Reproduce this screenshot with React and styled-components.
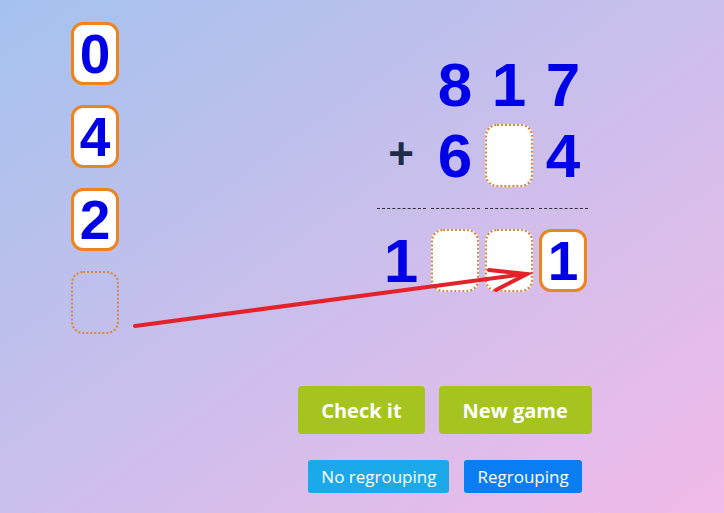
import React from 'react';
import styled, { createGlobalStyle } from 'styled-components';

const GlobalStyle = createGlobalStyle`
  html, body {
    margin: 0;
    padding: 0;
  }
  body {
    font-family: 'Liberation Sans', Arial, sans-serif;
  }
`;

const Page = styled.div`
  position: relative;
  box-sizing: border-box;
  width: 100%;
  min-height: 513px;
  padding: 22px 0 0 71px;
  background: linear-gradient(to bottom right, #a4c2ee, #f2bbe9);
  overflow: hidden;
`;

const Board = styled.div`
  display: flex;
  align-items: flex-start;
  gap: 257px;
`;

const Column = styled.div`
  display: flex;
  flex-direction: column;
  gap: 20px;
`;

const Tile = styled.div`
  box-sizing: border-box;
  width: 48px;
  height: 63px;
  margin: 0 auto;
  border-radius: 12px;
  border: ${p => (p.filled ? '3px solid #ec8421' : '2px dotted #d9873a')};
  background: ${p => (p.empty ? 'transparent' : '#fff')};
  color: #0000e8;
  font-weight: bold;
  font-size: 55px;
  line-height: 59px;
  text-align: center;
`;

const Problem = styled.div`
  display: flex;
  flex-direction: column;
  margin-top: 31px;
`;

const Row = styled.div`
  display: grid;
  grid-template-columns: repeat(4, 50px);
  column-gap: 4px;
  height: 64px;
  margin-top: ${p => p.gap || 0}px;
`;

const Digit = styled.div`
  color: #0000e8;
  font-weight: bold;
  font-size: 62px;
  line-height: 64px;
  text-align: center;
`;

const Plus = styled.div`
  color: #1f2c48;
  font-weight: bold;
  font-size: 44px;
  line-height: 60px;
  text-align: center;
`;

const Rule = styled.div`
  display: grid;
  grid-template-columns: repeat(4, 49px);
  column-gap: 5px;
  margin: 20px 0 20px 1px;
`;

const Dash = styled.div`
  border-bottom: 1px dashed #30303c;
`;

const Controls = styled.div`
  display: flex;
  flex-direction: column;
  align-items: center;
  width: 294px;
  margin: 52px 0 0 227px;
  gap: 26px;
`;

const ButtonRow = styled.div`
  display: flex;
  gap: ${p => p.gap}px;
`;

const BigButton = styled.button`
  height: 48px;
  padding: 0 ${p => p.pad}px;
  border: none;
  border-radius: 4px;
  background: #a6c420;
  color: #fff;
  font-family: 'Open Sans', sans-serif;
  font-weight: bold;
  font-size: 20px;
  cursor: pointer;
`;

const ModeButton = styled.button`
  height: 33px;
  padding: 0 13px;
  border: none;
  border-radius: 3px;
  background: ${p => (p.active ? '#0b7df3' : '#1ca9ea')};
  color: #fff;
  font-family: 'Open Sans', sans-serif;
  font-size: 17px;
  cursor: pointer;
`;

const Arrow = styled.svg`
  position: absolute;
  left: 0;
  top: 0;
  pointer-events: none;
`;

const App = () => {
  const pool = ['0', '4', '2', ''];

  return (
    <Page>
      <GlobalStyle />
      <Board>
        <Column>
          {pool.map((d, i) => (
            <Tile key={i} filled={!!d} empty={!d}>
              {d}
            </Tile>
          ))}
        </Column>

        <Problem>
          <Row>
            <div />
            <Digit>8</Digit>
            <Digit>1</Digit>
            <Digit>7</Digit>
          </Row>
          <Row gap={7}>
            <Plus>+</Plus>
            <Digit>6</Digit>
            <Tile />
            <Digit>4</Digit>
          </Row>
          <Rule>
            <Dash />
            <Dash />
            <Dash />
            <Dash />
          </Rule>
          <Row>
            <Digit>1</Digit>
            <Tile />
            <Tile />
            <Tile filled>1</Tile>
          </Row>
        </Problem>
      </Board>

      <Controls>
        <ButtonRow gap={14}>
          <BigButton pad={23}>Check it</BigButton>
          <BigButton pad={24}>New game</BigButton>
        </ButtonRow>
        <ButtonRow gap={15}>
          <ModeButton>No regrouping</ModeButton>
          <ModeButton active>Regrouping</ModeButton>
        </ButtonRow>
      </Controls>

      <Arrow width="724" height="513" viewBox="0 0 724 513">
        <g stroke="#e4222b" strokeWidth="4" strokeLinecap="round" fill="none">
          <line x1="135" y1="326" x2="525" y2="274" />
          <polyline points="489,270 527,274 496,290" strokeLinejoin="miter" />
        </g>
      </Arrow>
    </Page>
  );
};

export default App;
